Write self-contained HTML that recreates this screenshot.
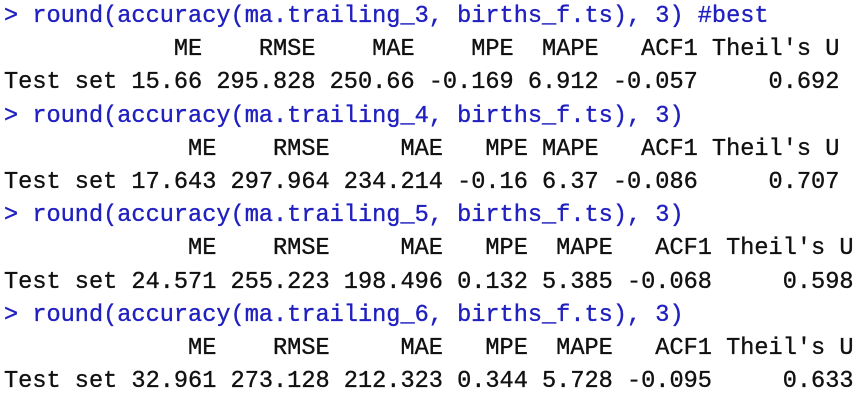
<!DOCTYPE html>
<html><head><meta charset="utf-8"><style>
html,body{margin:0;padding:0;background:#fff;width:866px;height:400px;overflow:hidden}
pre{margin:0;position:absolute;left:4px;top:0px;font-family:"Liberation Mono","DejaVu Sans Mono",monospace;font-size:23.6px;line-height:33.2px;color:#111;-webkit-text-stroke:0.35px #111}
.b{color:#2020c0;-webkit-text-stroke:0.35px #2020c0}
</style></head><body>
<pre><span class="b">&gt; round(accuracy(ma.trailing_3, births_f.ts), 3) #best</span>
            ME    RMSE    MAE    MPE  MAPE   ACF1 Theil's U
Test set 15.66 295.828 250.66 -0.169 6.912 -0.057     0.692
<span class="b">&gt; round(accuracy(ma.trailing_4, births_f.ts), 3)</span>
             ME    RMSE     MAE   MPE MAPE   ACF1 Theil's U
Test set 17.643 297.964 234.214 -0.16 6.37 -0.086     0.707
<span class="b">&gt; round(accuracy(ma.trailing_5, births_f.ts), 3)</span>
             ME    RMSE     MAE   MPE  MAPE   ACF1 Theil's U
Test set 24.571 255.223 198.496 0.132 5.385 -0.068     0.598
<span class="b">&gt; round(accuracy(ma.trailing_6, births_f.ts), 3)</span>
             ME    RMSE     MAE   MPE  MAPE   ACF1 Theil's U
Test set 32.961 273.128 212.323 0.344 5.728 -0.095     0.633</pre>
</body></html>
